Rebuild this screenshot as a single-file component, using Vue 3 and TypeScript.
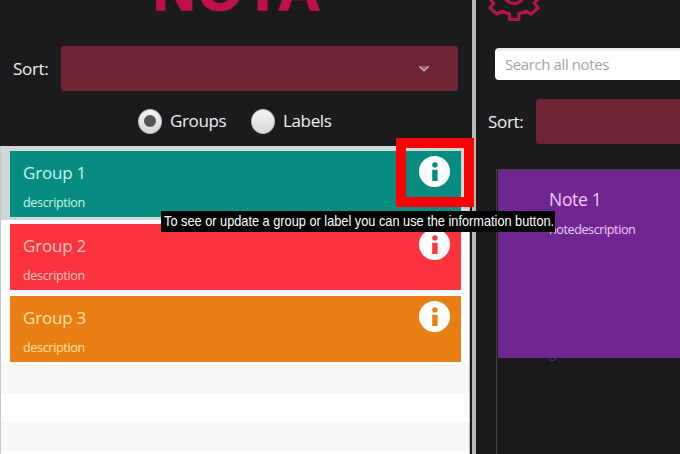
<script setup lang="ts">
interface Group {
  name: string
  color: string
  text: string
  selected?: boolean
}

const groups: Group[] = [
  { name: 'Group 1', color: '#078c80', text: '#c9f5ee', selected: true },
  { name: 'Group 2', color: '#fb343d', text: '#ffc5bd' },
  { name: 'Group 3', color: '#ea7f13', text: '#ffe0a6' },
]
</script>

<template>
  <div class="app">
    <section class="left">
      <header class="brand"><span>NOTA</span></header>
      <div class="sort-row">
        <span class="label">Sort:</span>
        <div class="select">
          <svg width="12" height="8" viewBox="0 0 12 8"><path d="M1 1H11L6 6.6Z" fill="#8c5965" /><path d="M1.5 1.5L6 6L10.5 1.5" fill="none" stroke="#d5bdc2" stroke-width="1.1" /></svg>
        </div>
      </div>
      <div class="radios">
        <span class="radio on"></span><span class="radio-text groups">Groups</span>
        <span class="radio"></span><span class="radio-text labels">Labels</span>
      </div>
      <div class="list">
        <div v-for="g in groups" :key="g.name" class="row" :class="{ selected: g.selected }">
          <article class="card" :style="{ background: g.color, color: g.text }">
            <div>
              <h2>{{ g.name }}</h2>
              <p>description</p>
            </div>
            <svg class="info" width="31" height="31" viewBox="0 0 31 31">
              <circle cx="15.5" cy="15.5" r="15.5" fill="#fff" />
              <circle cx="15.9" cy="8.9" r="2.7" :fill="g.color" />
              <path d="M13.2 13.8H18.6V25H13.2Z" :fill="g.color" />
            </svg>
          </article>
        </div>
        <div v-for="n in 4" :key="n" class="stripe"></div>
      </div>
    </section>
    <div class="divider"></div>
    <section class="right">
      <header class="tools">
        <svg width="56" height="24" viewBox="486 0 56 24" fill="none" stroke="#b01747" stroke-width="3.3">
          <path d="M490 -1L493.5 3L490 8L497 14L502 11.2L509.4 14L509.8 19.3H518.6L519 14L526 11.2L531 14L538 8L534.5 3L538 -1" />
          <circle cx="514" cy="-6.5" r="10" />
        </svg>
      </header>
      <div class="search">Search all notes</div>
      <div class="sort-row sort-notes">
        <span class="label">Sort:</span>
        <div class="select"></div>
      </div>
      <div class="notes">
        <article class="note">
          <h2>Note 1</h2>
          <p>notedescription</p>
        </article>
        <span class="peek">g</span>
      </div>
    </section>
    <div class="highlight"></div>
    <div class="caption"><span>To see or update a group or label you can use the information button.</span></div>
  </div>
</template>

<style>
body { background: #1b1b1d; overflow: hidden; }
</style>

<style scoped>
* { box-sizing: border-box; }
h2, p { margin: 0; font-weight: 400; white-space: nowrap; }
.app { position: relative; display: flex; width: 680px; height: 454px; overflow: hidden; background: #1b1b1d; font-family: "Open Sans", "Noto Sans", sans-serif; color: #f0f0f0; }
.left { width: 472px; height: 454px; display: flex; flex-direction: column; flex: none; }
.brand { height: 46px; display: flex; justify-content: center; overflow: hidden; color: #c01048; font: 700 59px/59px "Liberation Sans", sans-serif; -webkit-text-stroke: 1.6px #c01048; }
.brand span { margin: -39px 0 0 3px; letter-spacing: 1.6px; }
.sort-row { display: flex; align-items: center; height: 45px; padding-left: 13px; flex: none; }
.label { width: 48px; flex: none; font-size: 17px; letter-spacing: -.3px; white-space: nowrap; }
.select { width: 397px; height: 45px; background: #6f2433; border-radius: 3px; display: flex; align-items: center; justify-content: flex-end; padding-right: 28px; }
.radios { height: 55px; display: flex; align-items: center; padding: 5px 0 0 138px; flex: none; }
.radio { width: 24px; height: 25px; border-radius: 50%; background: linear-gradient(#f4f4f4, #d8d8d8); border: 1px solid #bbb; display: flex; align-items: center; justify-content: center; flex: none; }
.on::after { content: ""; width: 12px; height: 12px; border-radius: 50%; background: #555; }
.radio-text { font-size: 17px; margin: -2px 0 0 8px; letter-spacing: -.35px; }
.groups { width: 81px; }
.list { width: 470px; height: 308px; border-left: 1px solid #c8c8c8; border-right: 1px solid #bbb; background: #fff; overflow: hidden; }
.row { height: 72px; padding: 4px 8px 2px 9px; }
.row.selected { height: 74px; padding-top: 5px; padding-bottom: 3px; background: #d3d6d6; }
.card { height: 66px; padding: 10px 11px 0 13px; display: flex; justify-content: space-between; }
.card h2 { font-size: 17px; line-height: 24px; letter-spacing: -.2px; }
.card p { font-size: 12.6px; line-height: 18px; margin-top: 9px; letter-spacing: -.36px; }
.info { margin-top: -5px; }
.stripe { height: 29px; background: #f8f8f8; }
.stripe:nth-child(odd) { background: #fff; }
.divider { width: 4px; background: #b9b9b9; flex: none; }
.right { flex: 1; min-width: 0; overflow: hidden; }
.tools { height: 48px; padding-left: 10px; }
.search { width: 220px; height: 32px; margin-left: 19px; padding-left: 10px; border-radius: 4px; background: linear-gradient(#e4e4e4, #fff 4px); color: #a5a5a5; font-size: 15px; line-height: 33px; letter-spacing: -.4px; }
.sort-notes { margin-top: 19px; padding-left: 12px; }
.sort-notes .select { flex: none; }
.notes { position: relative; margin: 25px 0 0 20px; height: 290px; border-left: 1px solid #414149; border-top: 1px solid #414149; }
.note { height: 188px; background: #6f2691; color: #efcdfb; padding: 16px 0 0 51px; margin-left: 1px; position: relative; z-index: 1; }
.note h2 { font-size: 17.5px; line-height: 26px; letter-spacing: -.3px; }
.note p { font-size: 12.6px; line-height: 18px; margin-top: 9px; letter-spacing: -.42px; }
.peek { position: absolute; left: 52px; top: 174px; font-size: 13px; line-height: 18px; color: #632481; }
.highlight { position: absolute; left: 396px; top: 138px; width: 78px; height: 69px; border: 10px solid red; }
.caption { position: absolute; z-index: 2; left: 161px; top: 211px; width: 394px; height: 21px; padding-left: 3px; background: #000; color: #fff; font: 14.5px/20px "Liberation Sans", sans-serif; white-space: nowrap; }
.caption span { display: inline-block; transform: scaleX(.88); transform-origin: left; }
</style>
